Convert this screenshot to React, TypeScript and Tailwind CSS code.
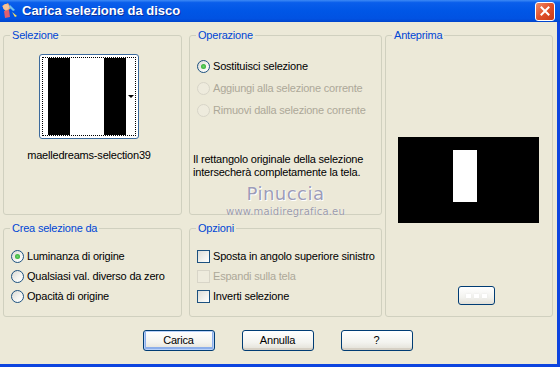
import React from 'react';

const font = "font-['Liberation_Sans',Arial,sans-serif]";

function Radio({ label, checked, disabled, h }: { label: string; checked?: boolean; disabled?: boolean; h: string }) {
  return (
    <div className={`flex items-center whitespace-nowrap ${h}`}>
      <span
        className={
          disabled
            ? 'flex h-[13px] w-[13px] items-center justify-center rounded-full border border-[#D8D5C8] bg-[#EEEBDD]'
            : 'flex h-[13px] w-[13px] items-center justify-center rounded-full border border-[#1C5180] bg-[linear-gradient(135deg,#D8D8D2,#F4F4F0_55%,#FFFFFF)]'
        }
      >
        {checked && <span className="h-[5px] w-[5px] rounded-full bg-[radial-gradient(circle,#6CD66C,#21A121)]" />}
      </span>
      <span className={disabled ? 'ml-[3px] text-[#ACA899]' : 'ml-[3px] text-black'}>{label}</span>
    </div>
  );
}

function Check({ label, disabled }: { label: string; disabled?: boolean }) {
  return (
    <div className="flex h-[20px] items-center whitespace-nowrap">
      <span
        className={
          disabled
            ? 'h-[13px] w-[13px] shrink-0 border border-[#D8D5C8] bg-[#EEEBDD]'
            : 'h-[13px] w-[13px] shrink-0 border border-[#1C5180] bg-[linear-gradient(135deg,#DCDCD7,#F2F2EE_60%,#FFFFFF)]'
        }
      />
      <span className={disabled ? 'ml-[3px] text-[#ACA899]' : 'ml-[3px] text-black'}>{label}</span>
    </div>
  );
}

function Group({ title, className, children }: { title: string; className: string; children?: React.ReactNode }) {
  return (
    <fieldset className={`min-w-0 rounded-[3px] border border-[#D0D0BF] ${className}`}>
      <legend className="ml-[6px] px-[2px] text-[11px] leading-[13px] text-[#0046D5]">{title}</legend>
      {children}
    </fieldset>
  );
}

function XpButton({ label, primary }: { label: string; primary?: boolean }) {
  return (
    <button
      className={
        primary
          ? 'h-[21px] w-[72px] rounded-[3px] border border-[#003C74] bg-[linear-gradient(to_bottom,#FFFFFF,#F3F3EF_60%,#E2DFD6)] text-[11px] text-black shadow-[inset_0_0_0_1px_#B8D0F8,inset_0_-1px_0_2px_#8CAEEA]'
          : 'h-[21px] w-[72px] rounded-[3px] border border-[#003C74] bg-[linear-gradient(to_bottom,#FFFFFF,#F3F3EF_60%,#E2DFD6)] text-[11px] text-black shadow-[inset_0_-2px_0_#D6D0C5]'
      }
    >
      {label}
    </button>
  );
}

export default function App() {
  return (
    <div className={`flex h-[367px] w-[560px] flex-col overflow-hidden bg-[#3E4640] ${font}`}>
      {/* title bar */}
      <div className="flex h-[22px] shrink-0 items-center bg-[linear-gradient(to_bottom,#3D8AF5_0%,#0A5EEB_12%,#0056E6_50%,#0152E2_85%,#0044CC_100%)]">
        <svg width="20" height="18" viewBox="0 0 20 18">
          <path d="M2 4 L8 1 L11 6 L6 10 Z" fill="#F0A060" />
          <circle cx="6" cy="5" r="3" fill="#F6C49A" />
          <path d="M4 9 L9 8 L10 15 L5 16 Z" fill="#E06070" />
          <path d="M10 3 L15 8 L13 9 L9 5 Z" fill="#6FC0F0" />
          <path d="M12 10 L17 14 L15 15 Z" fill="#F7E060" />
        </svg>
        <span className="ml-[2px] text-[13px] font-bold text-white [text-shadow:1px_1px_0_#0A2F9A]">Carica selezione da disco</span>
        <div className="ml-auto mr-[5px] flex h-[19px] w-[20px] items-center justify-center rounded-[3px] border border-white bg-[linear-gradient(135deg,#F08A6A,#E0502A_50%,#C83A18)]">
          <svg width="10" height="10" viewBox="0 0 10 10">
            <path d="M1.5 1.5 L8.5 8.5 M8.5 1.5 L1.5 8.5" stroke="white" strokeWidth="2" strokeLinecap="square" />
          </svg>
        </div>
      </div>

      {/* window body */}
      <div className="flex h-[345px] flex-col border-b-[3px] border-r-[3px] border-[#0D44DF] bg-[#ECE9D8] text-[11px] leading-[13px] tracking-[-0.2px] text-black">
        <div className="flex pl-[3px] pt-[7px]">
          <div className="grid grid-cols-[179px_193px] grid-rows-[186px_95px] gap-x-[7px] gap-y-[7px]">
            <Group title="Selezione" className="h-[186px]">
              <div className="flex w-[170px] flex-col items-center">
                <div className="mt-[12px] flex h-[85px] w-[100px] rounded-[3px] border border-[#3C6A9C] bg-white p-[2px]">
                  <div className="flex flex-1 border border-dotted border-black pl-[5px]">
                    <div className="w-[22px] bg-black" />
                    <div className="w-[34px] bg-white" />
                    <div className="w-[22px] bg-black" />
                    <div className="flex flex-1 items-center justify-end bg-white pr-[1px]">
                      <span className="mt-[-1px] h-0 w-0 border-x-[3px] border-t-[3px] border-x-transparent border-t-black" />
                    </div>
                  </div>
                </div>
                <div className="mt-[10px] whitespace-nowrap">maelledreams-selection39</div>
              </div>
            </Group>

            <Group title="Operazione" className="h-[186px]">
              <div className="mt-[13px] pl-[7px]">
                <Radio h="h-[22px]" label="Sostituisci selezione" checked />
                <Radio h="h-[22px]" label="Aggiungi alla selezione corrente" disabled />
                <Radio h="h-[22px]" label="Rimuovi dalla selezione corrente" disabled />
              </div>
              <div className="mt-[32px] whitespace-nowrap pl-[3px]">
                <div>Il rettangolo originale della selezione</div>
                <div>intersecherà completamente la tela.</div>
              </div>
              <div className="mt-[5px] text-center font-['DejaVu_Sans',sans-serif] text-[18px] leading-[20px] tracking-[0.5px] text-[#9C9CB8] [text-shadow:0_0_1px_#ffffff,1px_1px_0_#ffffff]">
                Pinuccia
              </div>
              <div className="mt-[2px] text-center font-['DejaVu_Sans',sans-serif] text-[10px] leading-[12px] tracking-[0.2px] text-[#9A9AA8] [text-shadow:0_0_1px_#ffffff]">
                www.maidiregrafica.eu
              </div>
            </Group>

            <Group title="Crea selezione da" className="h-[95px]">
              <div className="mt-[11px] pl-[7px]">
                <Radio h="h-[20px]" label="Luminanza di origine" checked />
                <Radio h="h-[20px]" label="Qualsiasi val. diverso da zero" />
                <Radio h="h-[20px]" label="Opacità di origine" />
              </div>
            </Group>

            <Group title="Opzioni" className="h-[95px]">
              <div className="mt-[11px] pl-[7px]">
                <Check label="Sposta in angolo superiore sinistro" />
                <Check label="Espandi sulla tela" disabled />
                <Check label="Inverti selezione" />
              </div>
            </Group>
          </div>

          <Group title="Anteprima" className="ml-[3px] h-[288px] w-[168px]">
            <div className="ml-[12px] mt-[95px] h-[86px] w-[141px] bg-black pl-[55px] pt-[13px]">
              <div className="h-[52px] w-[24px] bg-white" />
            </div>
            <div className="ml-[72px] mt-[63px] flex h-[19px] w-[37px] items-center justify-center gap-[3px] rounded-[3px] border border-[#003C74] bg-[linear-gradient(to_bottom,#FFFFFF,#F3F3EF_60%,#E2DFD6)]">
              <span className="h-[4px] w-[5px] bg-white shadow-[0_0_2px_#E4E4E4]" />
              <span className="h-[4px] w-[5px] bg-white shadow-[0_0_2px_#E4E4E4]" />
              <span className="h-[4px] w-[5px] bg-white shadow-[0_0_2px_#E4E4E4]" />
            </div>
          </Group>
        </div>

        <div className="mt-[13px] flex justify-center gap-[27px] pr-[2px]">
          <XpButton label="Carica" primary />
          <XpButton label="Annulla" />
          <XpButton label="?" />
        </div>
      </div>
    </div>
  );
}
